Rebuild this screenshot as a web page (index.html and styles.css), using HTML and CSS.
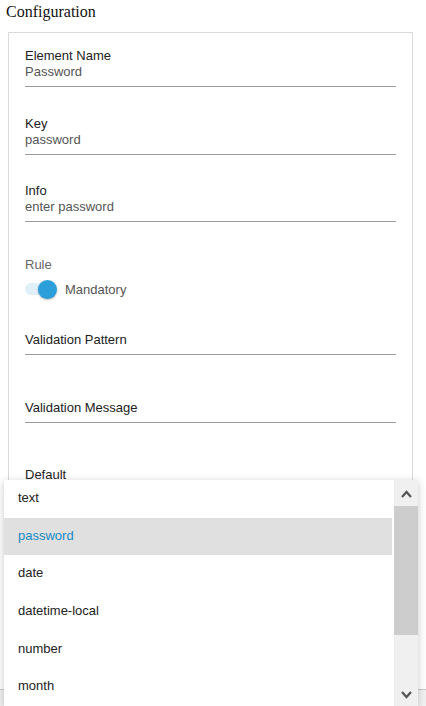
FILE: index.html
```html
<!DOCTYPE html>
<html>
<head>
<meta charset="utf-8">
<link rel="stylesheet" href="styles.css">
</head>
<body>
<div class="page">
  <div class="title">Configuration</div>
  <div class="card">
    <div class="field first">
      <div class="label">Element Name</div>
      <div class="value">Password</div>
    </div>
    <div class="field">
      <div class="label">Key</div>
      <div class="value">password</div>
    </div>
    <div class="field">
      <div class="label">Info</div>
      <div class="value">enter password</div>
    </div>
    <div class="rule">
      <div class="rule-label">Rule</div>
      <div class="toggle-row">
        <div class="toggle"><span class="track"></span><span class="knob"></span></div>
        <span class="toggle-text">Mandatory</span>
      </div>
    </div>
    <div class="field vp">
      <div class="label"></div>
      <div class="placeholder">Validation Pattern</div>
    </div>
    <div class="field">
      <div class="label"></div>
      <div class="placeholder">Validation Message</div>
    </div>
    <div class="field plain">
      <div class="label"></div>
      <div class="placeholder">Default</div>
    </div>
  </div>
  <div class="footer"></div>

  <div class="dropdown">
    <ul class="options">
      <li>text</li>
      <li class="selected">password</li>
      <li>date</li>
      <li>datetime-local</li>
      <li>number</li>
      <li>month</li>
    </ul>
    <div class="scrollbar">
      <div class="sb-btn up">
        <svg width="11" height="8" viewBox="0 0 11 8"><polyline points="1,7 5.5,2 10,7" fill="none" stroke="#555" stroke-width="2.2"/></svg>
      </div>
      <div class="sb-thumb"></div>
      <div class="sb-track"></div>
      <div class="sb-btn down">
        <svg width="11" height="8" viewBox="0 0 11 8"><polyline points="1,1 5.5,6 10,1" fill="none" stroke="#555" stroke-width="2.2"/></svg>
      </div>
    </div>
  </div>
</div>
</body>
</html>
```
FILE: styles.css
```css
html, body {
  margin: 0;
  padding: 0;
  background: #fff;
}
.page {
  position: relative;
  width: 426px;
  height: 706px;
  overflow: hidden;
}
.title {
  font-family: "Liberation Serif", "Times New Roman", serif;
  font-size: 16px;
  line-height: 18px;
  color: #111;
  margin: 3px 0 0 6px;
  height: 18px;
}
.card {
  box-sizing: border-box;
  margin: 11px 0 0 8px;
  width: 405px;
  height: 657px;
  border: 1px solid #dadada;
  padding: 15px 16px 0 16px;
  font-family: "Liberation Sans", Arial, sans-serif;
  font-size: 13px;
  line-height: 16px;
}
.field {
  margin-top: 28.5px;
  padding-bottom: 6px;
  border-bottom: 1px solid #9a9a9a;
}
.field.first {
  margin-top: 0;
}
.field.plain {
  border-bottom: none;
}
.label {
  height: 16px;
  color: #222;
}
.value {
  height: 16px;
  color: #555;
}
.placeholder {
  height: 16px;
  color: #222;
}
.rule {
  margin-top: 34.5px;
}
.rule-label {
  height: 16px;
  color: #666;
}
.toggle-row {
  margin-top: 7px;
  height: 19px;
  display: flex;
  align-items: center;
}
.toggle {
  position: relative;
  width: 32px;
  height: 19px;
}
.track {
  position: absolute;
  left: 0;
  top: 3.5px;
  width: 28px;
  height: 12px;
  border-radius: 6px;
  background: #e1eff9;
}
.knob {
  position: absolute;
  left: 13px;
  top: 0;
  width: 19px;
  height: 19px;
  border-radius: 50%;
  background: #2c9fda;
  box-shadow: 0 1px 2px rgba(0,0,0,0.3);
}
.toggle-text {
  margin-left: 8px;
  color: #555;
  line-height: 16px;
  padding-top: 1px;
}
.field.vp {
  margin-top: 17.5px;
}
.footer {
  height: 20px;
  border-top: 1px solid #c9c9c9;
  background: #f1f1f1;
}
.dropdown {
  position: absolute;
  left: 4px;
  top: 480px;
  width: 414px;
  height: 226px;
  background: #fff;
  box-shadow: 0 2px 8px rgba(0,0,0,0.22);
  display: flex;
  font-family: "Liberation Sans", Arial, sans-serif;
  font-size: 13px;
}
.options {
  list-style: none;
  margin: 0;
  padding: 0;
  flex: 1;
}
.options li {
  height: 37.7px;
  line-height: 35.7px;
  padding-bottom: 2px;
  box-sizing: border-box;
  padding-left: 14px;
  margin-right: 2px;
  color: #222;
  white-space: nowrap;
}
.options li.selected {
  background: #e0e0e0;
  color: #1a8ac4;
}
.scrollbar {
  width: 24px;
  display: flex;
  flex-direction: column;
  background: #f0f0f0;
}
.sb-btn {
  display: flex;
  align-items: center;
  justify-content: center;
}
.sb-btn.up {
  height: 26px;
  padding-top: 2px;
  box-sizing: border-box;
}
.sb-thumb {
  height: 129px;
  background: #cdcdcd;
}
.sb-track {
  flex: 1;
}
.sb-btn.down {
  height: 22px;
}
```
